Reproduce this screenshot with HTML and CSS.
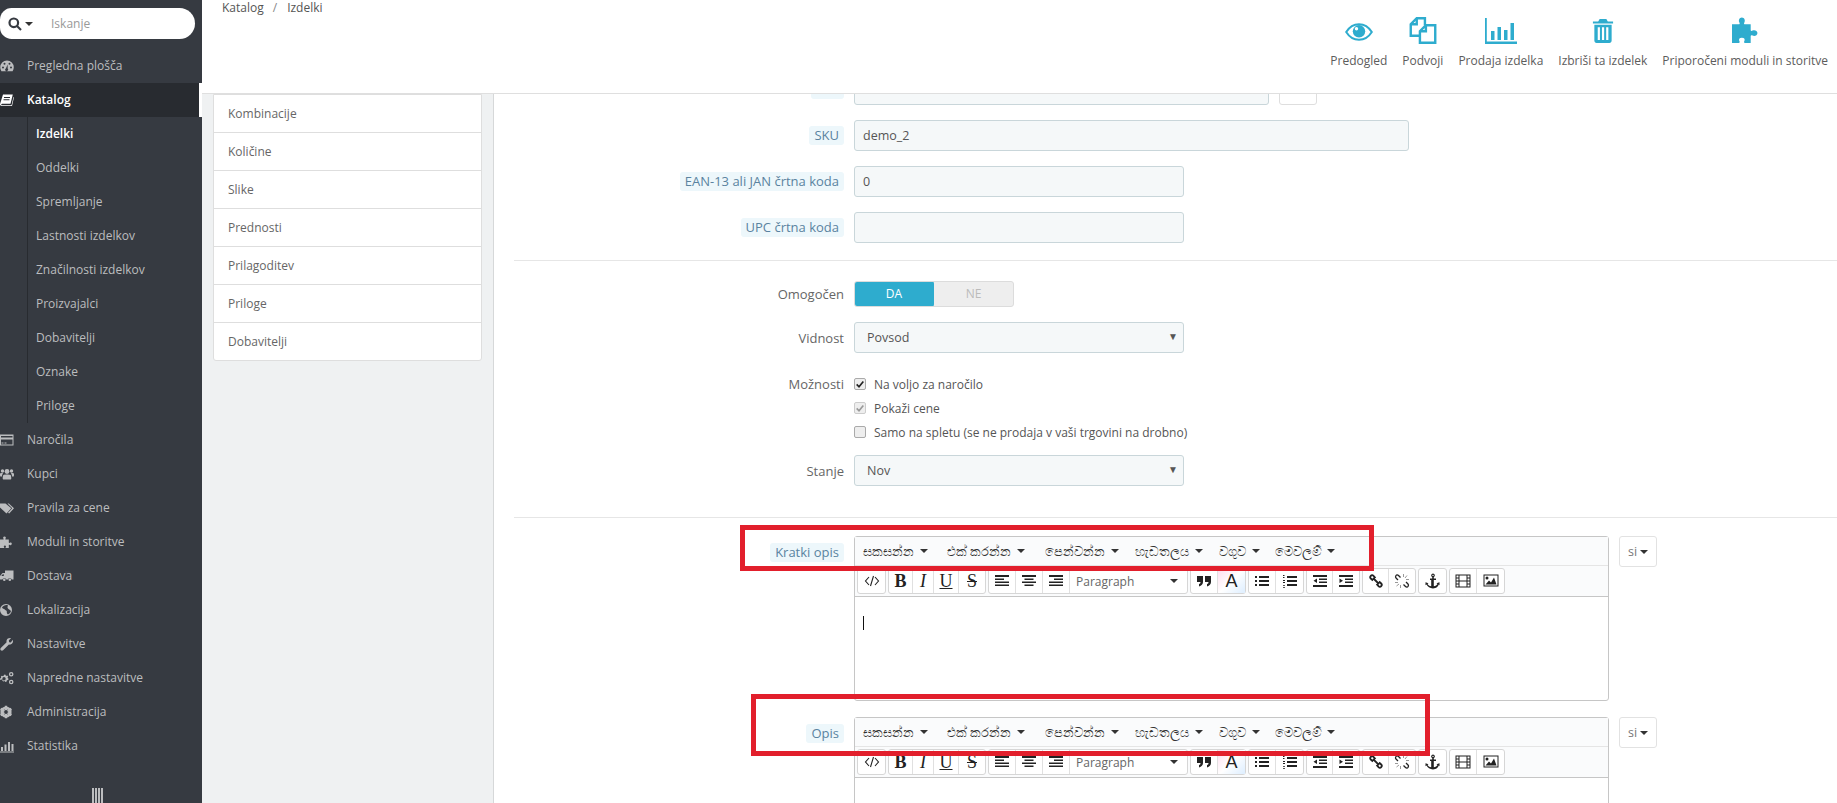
FILE: index.html
```html
<!DOCTYPE html>
<html lang="sl">
<head>
<meta charset="utf-8">
<title>Izdelki</title>
<link rel="stylesheet" href="styles.css">
</head>
<body>
<svg class="sprite" width="0" height="0" aria-hidden="true">
  <symbol id="i-gauge" viewBox="0 0 14 14"><path fill-rule="evenodd" d="M7 1.500a6.800 6.800 0 0 1 6.800 6.800c0 1.400-.4 2.800-1.200 3.900H1.400A6.800 6.800 0 0 1 .2 8.300 6.800 6.800 0 0 1 7 1.500zM3 7.500a1 1 0 1 0 0 2 1 1 0 0 0 0-2zm8 0a1 1 0 1 0 0 2 1 1 0 0 0 0-2zM4.500 3.800a1 1 0 1 0 0 2 1 1 0 0 0 0-2zm5 0a1 1 0 1 0 0 2 1 1 0 0 0 0-2zM7.600 5.500 6 9.300a1.500 1.500 0 1 0 1.700.3z"/></symbol>
  <symbol id="i-book" viewBox="0 0 14 14"><path fill-rule="evenodd" d="M3 1.500h9.800l-2.300 9.300H2.200c-.6 0-1 .3-1 .7s.4.700 1 .7h9.300l2-8.300.5.400-2 8.700H2c-1.200 0-2-.7-2-1.700 0-.3.100-.6.200-.9zM4 4v1h6V4zm-.5 2.200v1h6v-1z"/></symbol>
  <symbol id="i-card" viewBox="0 0 14 14"><path fill-rule="evenodd" d="M0 1.500h13.500v11H0zM1 3v1.500h11.500V3zm0 3.500V11.500h11.500V6.500zM1.500 9.500h2v1h-2zm3 0h2v1h-2z"/></symbol>
  <symbol id="i-users" viewBox="0 0 14 14"><circle cx="7" cy="4.500" r="2.400"/><circle cx="2.500" cy="4" r="1.700"/><circle cx="11.500" cy="4" r="1.700"/><path d="M3.500 8c1-.8 6-.8 7 0 .6.500.8 2 .8 3.500 0 .5-.4 1-1 1H3.700c-.6 0-1-.5-1-1 0-1.500.2-3 .8-3.500zM0 6.800c.5-.8 2.800-.8 3-.5-.6.800-1 1.800-1 3.200H.4C0 9.500 0 8 0 6.800zM14 6.800c-.5-.8-2.800-.8-3-.5.600.8 1 1.800 1 3.200h1.600c.4 0 .4-1.500.4-2.700z"/></symbol>
  <symbol id="i-tags" viewBox="0 0 14 14"><path d="M0 2.500h5.500l5.800 4.800-4.800 5.200L0 6.500z"/><path d="M7.500 2.500h1.300l5.200 4.800-4.800 5.200-1.200-.7 4.200-4.500z"/></symbol>
  <symbol id="i-puzzle" viewBox="0 0 14 14"><path d="M0 4.500h3.200c.5 0 .6-.5.200-1-.5-.6-.3-2 1.100-2s1.600 1.400 1.100 2c-.4.500-.3 1 .2 1h3v3c0 .5.500.6 1 .2.600-.5 2-.3 2 1.100s-1.400 1.600-2 1.100c-.5-.4-1-.3-1 .2v3H6c-.5 0-.6-.5-.2-1 .4-.6.200-1.500-.9-1.500s-1.300 1-.9 1.500c.4.500.3 1-.2 1H0z"/></symbol>
  <symbol id="i-truck" viewBox="0 0 14 14"><path fill-rule="evenodd" d="M5 1.500h8.500v9h-1.800a2 2 0 0 0-3.900 0H6.300a2 2 0 0 0-3.900 0H0V7l2.500-3H5zM1.300 7h2.500V5.200H2.800zM4.300 9.500a1.300 1.300 0 1 1 0 2.600 1.300 1.300 0 0 1 0-2.600zm5.500 0a1.300 1.300 0 1 1 0 2.600 1.300 1.300 0 0 1 0-2.600z"/></symbol>
  <symbol id="i-globe" viewBox="0 0 14 14"><path fill-rule="evenodd" d="M6 1a6 6 0 1 1 0 12A6 6 0 0 1 6 1zM2 4.500c.5 1.500 2 1 3 2.200.7.800 2 .7 1.800 2-.2 1.200.5 2.300 1.200 2.800 1.500-.8 2.800-2 3-3.800-1-.3-1.500-1.200-2.200-1.500C7.500 5.500 7 4.500 8 2.500 6 1.500 3.300 2.500 2 4.500z"/></symbol>
  <symbol id="i-wrench" viewBox="0 0 14 14"><path d="M12.800 2.800c.7 1.900-.2 4.300-2.300 4.800-.6.100-1.100.1-1.600 0L3.100 13.300c-.6.600-1.700.6-2.300 0s-.6-1.500 0-2.200L6.600 5.300c-.3-1.300 0-2.800 1.300-3.700 1-.7 2.200-.9 3.200-.5L8.800 3.500l.4 1.700 1.600.4z"/></symbol>
  <symbol id="i-cogs" viewBox="0 0 14 14"><path fill-rule="evenodd" d="M4.500 3.500l1 .2.500 1.300 1.300-.4.900 1-.7 1.200 1 .9-.3 1.300-1.300.2-.2 1.400-1.300.4-.9-1-1.300.5-1-.9.500-1.300L.2 8.900 0 7.600l1.200-.7-.3-1.300 1-.9 1.200.5zM4 6a1.700 1.700 0 1 0 0 3.400A1.700 1.700 0 0 0 4 6z"/><path fill-rule="evenodd" d="M11.200 1a2.300 2.300 0 1 1 0 4.600 2.300 2.300 0 0 1 0-4.600zm0 1.300a1 1 0 1 0 0 2 1 1 0 0 0 0-2zM11.200 8.700a2.300 2.300 0 1 1 0 4.600 2.300 2.300 0 0 1 0-4.600zm0 1.300a1 1 0 1 0 0 2 1 1 0 0 0 0-2z"/></symbol>
  <symbol id="i-cog" viewBox="0 0 14 14"><circle cx="6" cy="7" r="4.300" fill="none" stroke="currentColor" stroke-width="2.600"/><path stroke="currentColor" stroke-width="2.400" d="M6 .8v12.400M.6 3.900l10.800 6.200M.6 10.100l10.800-6.200"/><circle cx="6" cy="7" r="1.900" fill="#363a41"/></symbol>
  <symbol id="i-bars" viewBox="0 0 14 14"><path d="M0 12.500h14v1H0zM1 8h2v4H1zm3.500-2.500h2V12h-2zM8 3h2v9H8zm3.500 2h2v7h-2z"/></symbol>
  <symbol id="a-eye" viewBox="0 0 28 18"><path fill="none" stroke="currentColor" stroke-width="2" d="M1.200 9C4 4.500 8.800 1.200 14 1.200S24 4.500 26.800 9C24 13.500 19.200 16.800 14 16.800S4 13.500 1.200 9z"/><circle cx="14" cy="8.300" r="6.200"/><circle cx="11.500" cy="5.800" r="1.700" fill="#fff"/></symbol>
  <symbol id="a-copy" viewBox="0 0 28 28"><path fill="none" stroke="currentColor" stroke-width="2.500" d="M16 8.500V1.300H7.500L1.300 7.500v12H10.500"/><path fill="none" stroke="currentColor" stroke-width="2.500" d="M7.500 1.300v6.200H1.300M26.700 8.500H17L10.800 14.700v12h15.900zM17 8.500v6.200h-6.200"/></symbol>
  <symbol id="a-bars" viewBox="0 0 32 26"><path d="M0 0h1.800v23.500H32V26H0zM6 13h3.500v9H6zm6.500-4H16v13h-3.500zm6.500 3h3.500v10H19zm6.500-7H29v17h-3.500z"/></symbol>
  <symbol id="a-trash" viewBox="0 0 22 25"><path fill-rule="evenodd" d="M7.500 0h7l1.500 2.500h5.500v2.300H.5V2.500H6zM2 6h18v16.500c0 1.400-1 2.500-2.300 2.500H4.300C3 25 2 23.900 2 22.500zm3.500 2.500v13.500h2.300V8.500zm4.400 0v13.500h2.300V8.500zm4.400 0v13.500h2.300V8.500z"/></symbol>
  <symbol id="a-puzzle" viewBox="0 0 26 26"><path d="M0 7h6.500c1 0 1.200-.8.600-1.800C6 3.500 7 .5 9.500.5s3.500 3 2.400 4.700c-.6 1-.4 1.800.6 1.800H18v5.500c0 1 .8 1.200 1.800.6 1.700-1.100 4.700-.1 4.700 2.400s-3 3.500-4.700 2.400c-1-.6-1.800-.4-1.800.6V25h-5.500c-1 0-1.200-.8-.6-1.800.8-1.500.2-3.200-2.400-3.200s-3.200 1.700-2.400 3.200c.6 1 .4 1.800-.6 1.800H0z"/></symbol>
  <symbol id="t-code" viewBox="0 0 16 16"><path fill="none" stroke="currentColor" stroke-width="1.100" d="M5 4 1.500 8 5 12M11 4l3.500 4-3.500 4M9.500 3l-3 10"/></symbol>
  <symbol id="t-left" viewBox="0 0 16 16"><path d="M1 2h14v2H1zM1 5.500h9v1.500H1zM1 8.500h14V10H1zM1 11.500h14V13H1z"/></symbol>
  <symbol id="t-center" viewBox="0 0 16 16"><path d="M1 2h14v2H1zM3.500 5.500h9v1.500h-9zM1 8.500h14V10H1zM3.500 11.500h9V13h-9z"/></symbol>
  <symbol id="t-right" viewBox="0 0 16 16"><path d="M1 2h14v2H1zM6 5.500h9v1.500H6zM1 8.500h14V10H1zM1 11.500h14V13H1z"/></symbol>
  <symbol id="t-quote" viewBox="0 0 16 16"><path d="M1 3h6v6c0 2-1.500 4-4 4.500V11c1 0 1.500-.8 1.500-2H1zM9 3h6v6c0 2-1.500 4-4 4.500V11c1 0 1.500-.8 1.500-2H9z"/></symbol>
  <symbol id="t-ul" viewBox="0 0 16 16"><path d="M1 3h2v2H1zM5 3h10v2H5zM1 7h2v2H1zM5 7h10v2H5zM1 11h2v2H1zM5 11h10v2H5z"/></symbol>
  <symbol id="t-ol" viewBox="0 0 16 16"><path d="M1 2h1.500v1H1zM1 4h1.500v1H1zM1 7h2v1H1zM1 9h2v1H1zM1 12h2v.8H1zM1 14h2v.8H1zM5 3h10v2H5zM5 7h10v2H5zM5 11h10v2H5z"/></symbol>
  <symbol id="t-out" viewBox="0 0 16 16"><path d="M1 2h14v2H1zM7 5.500h8v1.500H7zM7 8.500h8V10H7zM1 12h14v2H1zM5 5.500v4.500L1.500 7.800z"/></symbol>
  <symbol id="t-in" viewBox="0 0 16 16"><path d="M1 2h14v2H1zM7 5.500h8v1.500H7zM7 8.500h8V10H7zM1 12h14v2H1zM1.500 5.500V10L5 7.800z"/></symbol>
  <symbol id="t-link" viewBox="0 0 16 16"><path fill="none" stroke="currentColor" stroke-width="1.800" d="M7.500 5 5.500 2.800c-.8-.8-2-.8-2.700 0s-.8 1.900 0 2.700L5 7.500M8.500 11l2 2.200c.8.800 2 .8 2.700 0s.8-1.900 0-2.700L11 8.500M5 5l6 6"/></symbol>
  <symbol id="t-unlink" viewBox="0 0 16 16"><path fill="none" stroke="currentColor" stroke-width="1.300" d="M6.500 4.500 4.500 2.500c-.8-.8-2-.8-2.500 0s-.8 1.700 0 2.500l2 2M9.500 11.500l2 2c.8.800 2 .8 2.500 0s.8-1.700 0-2.500l-2-2"/><path fill="none" stroke="#999" stroke-width="1" d="M9.500 1v3M13 2.500 11 5M1 9.500h3M2.500 13 5 11M15 6.500h-3M6.500 15v-3"/></symbol>
  <symbol id="t-anchor" viewBox="0 0 16 16"><path fill-rule="evenodd" d="M8 .5a1.900 1.900 0 0 1 .8 3.600V5.500H11v1.500H8.800v6.200c1.700-.2 3-1 3.700-2.200l-1-.8 3-1v3l-1-.6C13.500 13.500 11 15.500 8 15.500S2.500 13.500 1.500 11.600l-1 .6v-3l3 1-1 .8c.7 1.200 2 2 3.700 2.200V7H5V5.500h2.200V4.100A1.900 1.900 0 0 1 8 .5zm0 1.200a.7.7 0 1 0 0 1.400.7.700 0 0 0 0-1.400z"/></symbol>
  <symbol id="t-film" viewBox="0 0 16 16"><path fill-rule="evenodd" d="M.5 1.500h15v13H.5zM1.500 2.500v2h2v-2zm0 3v2h2v-2zm0 3v2h2v-2zm0 3v2h2v-2zm3-9v5h7v-5zm0 6v5h7v-5zm8-6v2h2v-2zm0 3v2h2v-2zm0 3v2h2v-2zm0 3v2h2v-2z"/></symbol>
  <symbol id="t-image" viewBox="0 0 16 16"><path fill-rule="evenodd" d="M.5 1.500h15v12H.5zM1.500 2.500v10h13v-10zM2.500 11.500l3.500-4 2 2 3-5 2.500 7zM4 3.500a1.500 1.500 0 1 1 0 3 1.500 1.500 0 0 1 0-3z"/></symbol>
</svg>

<div class="page">
  <nav class="sidebar">
    <div class="search">
      <svg class="search-icon" viewBox="0 0 14 14"><circle cx="5.800" cy="5.800" r="4.300"/><path d="M9 9l4 4"/></svg>
      <span class="caret caret-dark"></span>
      <span class="search-text">Iskanje</span>
    </div>
    <ul class="menu">
      <li class="menu-item"><svg class="mi"><use href="#i-gauge"/></svg>Pregledna plošča</li>
      <li class="menu-item menu-item-active"><svg class="mi"><use href="#i-book"/></svg>Katalog</li>
      <li class="submenu">
        <ul class="submenu-list">
          <li class="sub-item sub-item-active">Izdelki</li>
          <li class="sub-item">Oddelki</li>
          <li class="sub-item">Spremljanje</li>
          <li class="sub-item">Lastnosti izdelkov</li>
          <li class="sub-item">Značilnosti izdelkov</li>
          <li class="sub-item">Proizvajalci</li>
          <li class="sub-item">Dobavitelji</li>
          <li class="sub-item">Oznake</li>
          <li class="sub-item">Priloge</li>
        </ul>
      </li>
      <li class="menu-item"><svg class="mi"><use href="#i-card"/></svg>Naročila</li>
      <li class="menu-item"><svg class="mi"><use href="#i-users"/></svg>Kupci</li>
      <li class="menu-item"><svg class="mi"><use href="#i-tags"/></svg>Pravila za cene</li>
      <li class="menu-item"><svg class="mi"><use href="#i-puzzle"/></svg>Moduli in storitve</li>
      <li class="menu-item"><svg class="mi"><use href="#i-truck"/></svg>Dostava</li>
      <li class="menu-item"><svg class="mi"><use href="#i-globe"/></svg>Lokalizacija</li>
      <li class="menu-item"><svg class="mi"><use href="#i-wrench"/></svg>Nastavitve</li>
      <li class="menu-item"><svg class="mi"><use href="#i-cogs"/></svg>Napredne nastavitve</li>
      <li class="menu-item"><svg class="mi"><use href="#i-cog"/></svg>Administracija</li>
      <li class="menu-item"><svg class="mi"><use href="#i-bars"/></svg>Statistika</li>
    </ul>
    <div class="collapse"><i></i><i></i><i></i><i></i></div>
  </nav>

  <div class="main">
    <header class="topbar">
      <div class="crumbs"><span>Katalog</span><span class="crumb-sep">/</span><span>Izdelki</span></div>
      <div class="actions">
        <div class="action"><svg class="ai ai-eye"><use href="#a-eye"/></svg><span>Predogled</span></div>
        <div class="action"><svg class="ai ai-copy"><use href="#a-copy"/></svg><span>Podvoji</span></div>
        <div class="action"><svg class="ai ai-bars"><use href="#a-bars"/></svg><span>Prodaja izdelka</span></div>
        <div class="action"><svg class="ai ai-trash"><use href="#a-trash"/></svg><span>Izbriši ta izdelek</span></div>
        <div class="action"><svg class="ai ai-puzzle"><use href="#a-puzzle"/></svg><span>Priporočeni moduli in storitve</span></div>
      </div>
    </header>

    <div class="content">
      <aside class="tabs-col">
        <ul class="tabs">
          <li>Kombinacije</li>
          <li>Količine</li>
          <li>Slike</li>
          <li>Prednosti</li>
          <li>Prilagoditev</li>
          <li>Priloge</li>
          <li>Dobavitelji</li>
        </ul>
      </aside>

      <section class="form-clip">
        <form class="form">
          <div class="row row-first">
            <label class="lab"><span class="hint">Ime</span></label>
            <div class="field field-name"></div>
            <div class="field field-lang"></div>
          </div>
          <div class="row">
            <label class="lab"><span class="hint">SKU</span></label>
            <div class="field field-wide">demo_2</div>
          </div>
          <div class="row">
            <label class="lab"><span class="hint">EAN-13 ali JAN črtna koda</span></label>
            <div class="field field-mid">0</div>
          </div>
          <div class="row">
            <label class="lab"><span class="hint">UPC črtna koda</span></label>
            <div class="field field-mid"></div>
          </div>
          <hr class="sep sep-a">
          <div class="row row-switch">
            <label class="lab">Omogočen</label>
            <div class="switch"><span class="sw-on">DA</span><span class="sw-off">NE</span></div>
          </div>
          <div class="row">
            <label class="lab">Vidnost</label>
            <div class="field field-mid field-select">Povsod<span class="sel-arrow">▼</span></div>
          </div>
          <div class="row row-options">
            <label class="lab">Možnosti</label>
            <div class="options">
              <div class="opt"><span class="box"><svg viewBox="0 0 12 12"><path d="M2 6.500l2.800 2.800L10 3"/></svg></span>Na voljo za naročilo</div>
              <div class="opt"><span class="box box-off"><svg viewBox="0 0 12 12"><path d="M2 6.500l2.800 2.800L10 3"/></svg></span>Pokaži cene</div>
              <div class="opt"><span class="box"></span>Samo na spletu (se ne prodaja v vaši trgovini na drobno)</div>
            </div>
          </div>
          <div class="row row-state">
            <label class="lab">Stanje</label>
            <div class="field field-mid field-select">Nov<span class="sel-arrow">▼</span></div>
          </div>
          <hr class="sep sep-b">

          <div class="row row-editor">
            <label class="lab lab-editor"><span class="hint">Kratki opis</span></label>
            <div class="editor editor-short">
              <div class="ed-menu">
                <span>සකසන්න<b class="caret caret-dark"></b></span>
                <span>එක් කරන්න<b class="caret caret-dark"></b></span>
                <span>පෙන්වන්න<b class="caret caret-dark"></b></span>
                <span>හැඩතලය<b class="caret caret-dark"></b></span>
                <span>වගුව<b class="caret caret-dark"></b></span>
                <span>මෙවලම්<b class="caret caret-dark"></b></span>
              </div>
              <div class="ed-tools">
                <div class="grp"><button type="button" class="tb"><svg class="ti"><use href="#t-code"/></svg></button></div>
                <div class="grp"><button type="button" class="tb tb-b">B</button><button type="button" class="tb tb-i">I</button><button type="button" class="tb tb-u">U</button><button type="button" class="tb tb-s">S</button></div>
                <div class="grp"><button type="button" class="tb"><svg class="ti"><use href="#t-left"/></svg></button><button type="button" class="tb"><svg class="ti"><use href="#t-center"/></svg></button><button type="button" class="tb"><svg class="ti"><use href="#t-right"/></svg></button><button type="button" class="tb tb-para">Paragraph<b class="caret caret-dark"></b></button></div>
                <div class="grp"><button type="button" class="tb"><svg class="ti"><use href="#t-quote"/></svg></button><button type="button" class="tb tb-color">A</button></div>
                <div class="grp"><button type="button" class="tb"><svg class="ti"><use href="#t-ul"/></svg></button><button type="button" class="tb"><svg class="ti"><use href="#t-ol"/></svg></button></div>
                <div class="grp grp-tight"><button type="button" class="tb"><svg class="ti"><use href="#t-out"/></svg></button><button type="button" class="tb"><svg class="ti"><use href="#t-in"/></svg></button></div>
                <div class="grp grp-tight"><button type="button" class="tb"><svg class="ti"><use href="#t-link"/></svg></button><button type="button" class="tb"><svg class="ti"><use href="#t-unlink"/></svg></button></div>
                <div class="grp"><button type="button" class="tb"><svg class="ti"><use href="#t-anchor"/></svg></button></div>
                <div class="grp"><button type="button" class="tb"><svg class="ti"><use href="#t-film"/></svg></button><button type="button" class="tb"><svg class="ti"><use href="#t-image"/></svg></button></div>
              </div>
              <div class="ed-body"><span class="cursor"></span></div>
            </div>
            <button type="button" class="lang">si<b class="caret caret-mid"></b></button>
            <div class="redbox redbox-a"></div>
          </div>

          <div class="row row-editor row-editor-2">
            <label class="lab lab-editor"><span class="hint">Opis</span></label>
            <div class="editor editor-long">
              <div class="ed-menu">
                <span>සකසන්න<b class="caret caret-dark"></b></span>
                <span>එක් කරන්න<b class="caret caret-dark"></b></span>
                <span>පෙන්වන්න<b class="caret caret-dark"></b></span>
                <span>හැඩතලය<b class="caret caret-dark"></b></span>
                <span>වගුව<b class="caret caret-dark"></b></span>
                <span>මෙවලම්<b class="caret caret-dark"></b></span>
              </div>
              <div class="ed-tools">
                <div class="grp"><button type="button" class="tb"><svg class="ti"><use href="#t-code"/></svg></button></div>
                <div class="grp"><button type="button" class="tb tb-b">B</button><button type="button" class="tb tb-i">I</button><button type="button" class="tb tb-u">U</button><button type="button" class="tb tb-s">S</button></div>
                <div class="grp"><button type="button" class="tb"><svg class="ti"><use href="#t-left"/></svg></button><button type="button" class="tb"><svg class="ti"><use href="#t-center"/></svg></button><button type="button" class="tb"><svg class="ti"><use href="#t-right"/></svg></button><button type="button" class="tb tb-para">Paragraph<b class="caret caret-dark"></b></button></div>
                <div class="grp"><button type="button" class="tb"><svg class="ti"><use href="#t-quote"/></svg></button><button type="button" class="tb tb-color">A</button></div>
                <div class="grp"><button type="button" class="tb"><svg class="ti"><use href="#t-ul"/></svg></button><button type="button" class="tb"><svg class="ti"><use href="#t-ol"/></svg></button></div>
                <div class="grp grp-tight"><button type="button" class="tb"><svg class="ti"><use href="#t-out"/></svg></button><button type="button" class="tb"><svg class="ti"><use href="#t-in"/></svg></button></div>
                <div class="grp grp-tight"><button type="button" class="tb"><svg class="ti"><use href="#t-link"/></svg></button><button type="button" class="tb"><svg class="ti"><use href="#t-unlink"/></svg></button></div>
                <div class="grp"><button type="button" class="tb"><svg class="ti"><use href="#t-anchor"/></svg></button></div>
                <div class="grp"><button type="button" class="tb"><svg class="ti"><use href="#t-film"/></svg></button><button type="button" class="tb"><svg class="ti"><use href="#t-image"/></svg></button></div>
              </div>
              <div class="ed-body"></div>
            </div>
            <button type="button" class="lang">si<b class="caret caret-mid"></b></button>
            <div class="redbox redbox-b"></div>
          </div>
        </form>
      </section>
    </div>
  </div>
</div>
</body>
</html>
```

FILE: styles.css
```css
* { box-sizing: border-box; }
html, body { margin: 0; height: 100%; overflow: hidden; }
body { font-family: "Open Sans", "Noto Sans", sans-serif; font-size: 12px; color: #555; background: #fff; }
ul { list-style: none; margin: 0; padding: 0; }
.sprite { position: absolute; }
.page { display: flex; height: 803px; width: 1837px; }

/* sidebar */
.sidebar { width: 202px; flex: none; background: #363a41; color: #bcbdbf; position: relative; padding-top: 8px; overflow: hidden; }
.search { height: 31px; width: 195px; background: #fff; border-radius: 12px 16px 16px 12px; display: flex; align-items: center; padding-left: 8px; margin-bottom: 10px; }
.search-icon { width: 14px; height: 14px; fill: none; stroke: #363a41; stroke-width: 2.200; }
.search-text { margin-left: 18px; color: #999; font-size: 12px; }
.caret { display: inline-block; width: 0; height: 0; border-style: solid; border-width: 4px 4px 0; border-color: #333 transparent transparent; }
.caret-dark { margin-left: 3px; }
.menu-item { height: 34px; display: flex; align-items: center; padding: 0 0 2px 27px; position: relative; font-size: 12px; }
.mi { position: absolute; left: 0; top: 10px; width: 14px; height: 14px; fill: #bcbdbf; color: #bcbdbf; }
.menu-item-active { background: #282b30; color: #fff; margin-right: 3px; font-weight: 600; box-shadow: 3px 0 0 #fff; }
.menu-item-active .mi { fill: #fff; }
.submenu-list { margin-left: 27px; border-left: 1px solid #282b30; padding-left: 8px; }
.sub-item { height: 34px; line-height: 34px; font-size: 12px; }
.sub-item-active { color: #fff; font-weight: 600; }
.collapse { position: absolute; left: 92px; top: 788px; display: flex; gap: 1px; }
.collapse i { width: 2px; height: 15px; background: #bcbdbf; }

/* main */
.main { flex: 1; display: flex; flex-direction: column; min-width: 0; }
.topbar { height: 94px; flex: none; border-bottom: 1px solid #dfdfdf; position: relative; background: #fff; z-index: 2; display: flex; justify-content: space-between; }
.crumbs { padding: 0 0 0 20px; font-size: 12px; line-height: 16px; display: flex; color: #555; }
.crumb-sep { margin: 0 10px 0 9px; color: #888; }
.actions { display: flex; gap: 15px; padding: 17px 9px 0 0; }
.action { display: flex; flex-direction: column; align-items: center; font-size: 12px; color: #5c5c5c; }
.action span { margin-top: 8px; line-height: 18px; white-space: nowrap; }
.ai { height: 27px; fill: #2eacce; color: #2eacce; }
.ai-eye { width: 28px; height: 18px; margin: 6px 0 3px; }
.ai-copy { width: 28px; }
.ai-bars { width: 32px; height: 26px; margin-top: 1px; }
.ai-trash { width: 22px; height: 24px; margin-top: 2px; margin-bottom: 1px; }
.ai-puzzle { width: 27px; }

.content { flex: 1; display: flex; min-height: 0; }
.tabs-col { width: 292px; flex: none; background: #eff1f2; border-right: 1px solid #d6d8d9; padding-left: 11px; }
.tabs { width: 269px; height: 267px; background: #fff; border: 1px solid #dedede; border-radius: 0 0 3px 3px; color: #666; }
.tabs li { height: 38px; line-height: 37px; padding-left: 14px; border-bottom: 1px solid #dedede; font-size: 12px; }
.tabs li:last-child { border-bottom: 0; }

/* form */
.form-clip { flex: 1; overflow: hidden; min-width: 0; }
.form { margin-top: -20px; padding-left: 20px; }
.row { display: flex; margin-top: 15px; align-items: center; }
.row-first { margin-top: 0; }
.lab { width: 330px; flex: none; text-align: right; margin-right: 10px; font-size: 13px; color: #666; }
.hint { display: inline-block; background: #edf7fb; color: #5a83a0; line-height: 19px; padding: 0 5px; border-radius: 3px; }
.field { height: 31px; background: #f5f8f9; border: 1px solid #c9d6da; border-radius: 3px; line-height: 30px; padding-left: 8px; font-size: 12.500px; position: relative; }
.field-name { width: 415px; }
.field-lang { width: 38px; margin-left: 10px; background: #fff; border-color: #dedede; }
.field-wide { width: 555px; }
.field-mid { width: 330px; }
.field-select { padding-left: 12px; }
.sel-arrow { position: absolute; right: 5px; top: -2px; font-size: 10px; color: #555; }
.sep { border: 0; border-top: 1px solid #e6e6e6; margin: 0; }
.sep-a { margin-top: 17px; }
.row-switch { margin-top: 20px; }
.switch { display: flex; width: 160px; height: 26px; border-radius: 3px; background: #eee; border: 1px solid #dcdcdc; overflow: hidden; line-height: 24px; text-align: center; font-size: 12px; }
.sw-on { width: 80px; background: #2eacce; color: #fff; margin: -1px 0 -1px -1px; line-height: 26px; border-radius: 3px; }
.sw-off { flex: 1; color: #bbb; }
.row-options { margin-top: 19px; align-items: flex-start; }
.row-options .lab { line-height: 24px; }
.options { display: flex; flex-direction: column; }
.opt { height: 24px; display: flex; align-items: center; font-size: 12px; }
.box { width: 12px; height: 12px; margin-right: 8px; border: 1px solid #aaa; border-radius: 2px; background: #eee; display: block; }
.box svg { width: 10px; height: 10px; display: block; fill: none; stroke: #222; stroke-width: 2; }
.box-off { border-color: #ccc; }
.box-off svg { stroke: #999; }
.row-state { margin-top: 11px; }
.sep-b { margin-top: 31px; }

.row-editor { margin-top: 18px; align-items: flex-start; position: relative; }
.row-editor-2 { margin-top: 16px; }
.lab-editor { padding-top: 7px; }
.editor { width: 755px; border: 1px solid #c6c6c6; border-radius: 3px 3px 0 0; background: #fff; }
.editor-short { height: 165px; border-radius: 3px; }
.editor-long { height: 200px; }
.ed-menu { height: 29px; background: #fafbfc; border-bottom: 1px solid #e5e5e5; padding-left: 8px; display: flex; align-items: center; font-size: 13.400px; color: #333; }
.ed-menu span { display: flex; align-items: center; white-space: nowrap; }
.ed-menu span:nth-child(1) { width: 84px; }
.ed-menu span:nth-child(2) { width: 98px; }
.ed-menu span:nth-child(3) { width: 90px; }
.ed-menu span:nth-child(4) { width: 84px; }
.ed-menu span:nth-child(5) { width: 56px; }
.ed-menu .caret { margin-left: 6px; }
.ed-tools { height: 31px; background: #fafbfc; border-bottom: 1px solid #c6c6c6; padding: 2px 0 0 2px; display: flex; gap: 2px; align-items: flex-start; }
.grp { display: flex; height: 26px; background: #fff; border: 1px solid #d6d6d6; border-radius: 3px; }
.tb { height: 24px; width: 27px; padding: 0; background: transparent; border: 0; border-right: 1px solid #e0e0e0; color: #222; fill: #222; display: flex; align-items: center; justify-content: center; font-family: "Liberation Serif", serif; font-size: 18px; }
.tb:last-child { border-right: 0; }
.grp-tight .tb { width: 26px; }
.ti { width: 16px; height: 16px; }
.tb-b { font-weight: 700; width: 24px; }
.tb-i { font-style: italic; width: 21px; }
.tb-u { text-decoration: underline; width: 25px; }
.tb-s { text-decoration: line-through; width: 26px; }
.tb-para { width: 117px; font-family: "Open Sans", sans-serif; font-size: 12px; color: #666; justify-content: flex-start; padding-left: 6px; position: relative; }
.tb-para .caret { position: absolute; right: 9px; top: 10px; }
.tb-color { font-family: "Liberation Sans", sans-serif; font-size: 18px; background: linear-gradient(135deg, #fde 0, #fff 50%, #def 100%); }
.ed-body { padding: 19px 8px; }
.cursor { display: block; width: 1px; height: 14px; background: #111; }
.lang { margin-left: 10px; width: 38px; height: 31px; border: 1px solid #e2e2e2; background: #fff; border-radius: 3px; padding: 0; color: #777; font: 12.500px "Open Sans", sans-serif; display: flex; align-items: center; justify-content: center; }
.caret-mid { margin-left: 3px; }
.redbox { position: absolute; border: 5px solid #e21f2c; pointer-events: none; }
.redbox-a { left: 226px; top: -11px; width: 634px; height: 46px; }
.redbox-b { left: 237px; top: -23px; width: 679px; height: 62px; }
```
